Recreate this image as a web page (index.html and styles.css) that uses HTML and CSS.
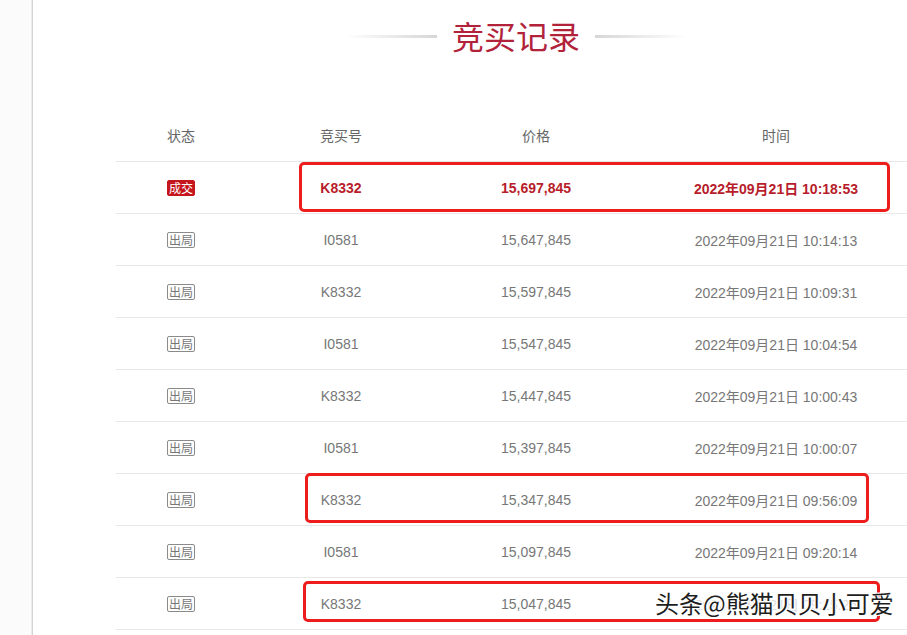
FILE: index.html
```html
<!DOCTYPE html>
<html>
<head lang="zh">
    <meta charset="UTF-8">
    <title>竞买记录</title>
    <link rel="stylesheet" href="styles.css">
</head>
<body>
<div class="page">
    <div class="title">
        <span class="line line-l"></span>
        <h2>竞买记录</h2>
        <span class="line line-r"></span>
    </div>

    <div class="record">
        <table>
            <thead>
            <tr>
                <th class="c1">状态</th>
                <th class="c2">竞买号</th>
                <th class="c3">价格</th>
                <th class="c4">时间</th>
            </tr>
            </thead>
            <tbody>
            <tr class="win">
                <td><span class="tag tag-win">成交</span></td>
                <td>K8332</td>
                <td>15,697,845</td>
                <td>2022年09月21日 10:18:53</td>
            </tr>
            <tr>
                <td><span class="tag">出局</span></td>
                <td>I0581</td>
                <td>15,647,845</td>
                <td>2022年09月21日 10:14:13</td>
            </tr>
            <tr>
                <td><span class="tag">出局</span></td>
                <td>K8332</td>
                <td>15,597,845</td>
                <td>2022年09月21日 10:09:31</td>
            </tr>
            <tr>
                <td><span class="tag">出局</span></td>
                <td>I0581</td>
                <td>15,547,845</td>
                <td>2022年09月21日 10:04:54</td>
            </tr>
            <tr>
                <td><span class="tag">出局</span></td>
                <td>K8332</td>
                <td>15,447,845</td>
                <td>2022年09月21日 10:00:43</td>
            </tr>
            <tr>
                <td><span class="tag">出局</span></td>
                <td>I0581</td>
                <td>15,397,845</td>
                <td>2022年09月21日 10:00:07</td>
            </tr>
            <tr>
                <td><span class="tag">出局</span></td>
                <td>K8332</td>
                <td>15,347,845</td>
                <td>2022年09月21日 09:56:09</td>
            </tr>
            <tr>
                <td><span class="tag">出局</span></td>
                <td>I0581</td>
                <td>15,097,845</td>
                <td>2022年09月21日 09:20:14</td>
            </tr>
            <tr>
                <td><span class="tag">出局</span></td>
                <td>K8332</td>
                <td>15,047,845</td>
                <td class="covered">2022年09月21日 09:15:26</td>
            </tr>
            </tbody>
        </table>

        <!-- 标注框 -->
        <div class="mark mark1"></div>
        <div class="mark mark2"></div>
        <div class="mark mark3"></div>
        <div class="watermark">头条@熊猫贝贝小可爱</div>
    </div>
</div>
</body>
</html>
```

FILE: styles.css
```css
* {
    margin: 0;
    padding: 0;
}

html, body {
    height: 100%;
}

body {
    background: #fbfbfb;
    overflow: hidden;
    font-family: Arial, "Liberation Sans", "Noto Sans CJK SC", sans-serif;
}

.page {
    margin-left: 32px;
    width: 967px;
    height: 100%;
    background: #fff;
    border-left: 1px solid #d4d4d4;
    box-shadow: -1px 0 0 #ececec;
    padding-top: 18px;
    box-sizing: border-box;
}

.title {
    display: flex;
    justify-content: center;
    align-items: center;
    gap: 15px;
    height: 40px;
}

.title h2 {
    font-size: 32px;
    font-weight: normal;
    line-height: 40px;
    color: #b2233b;
}

.title .line {
    width: 93px;
    height: 3px;
    margin-top: -4px;
}

.line-l {
    background: linear-gradient(to right, rgba(210, 210, 210, 0), #d6d6d6);
}

.line-r {
    background: linear-gradient(to left, rgba(210, 210, 210, 0), #d6d6d6);
}

.record {
    position: relative;
    width: 800px;
    margin: 51px auto 0;
}

table {
    width: 100%;
    border-collapse: collapse;
    table-layout: fixed;
}

th, td {
    height: 51px;
    text-align: center;
    font-size: 14px;
    border-bottom: 1px solid #e8e8e8;
}

th {
    font-weight: normal;
    color: #666;
    height: 52px;
}

td {
    color: #777;
}

td.covered {
    color: #ddd;
}

.c1 { width: 130px; }
.c2 { width: 190px; }
.c3 { width: 200px; }
.c4 { width: 280px; }

tr.win td {
    color: #b71d2b;
    font-weight: bold;
}

.tag {
    display: inline-block;
    width: 26px;
    height: 14px;
    line-height: 14px;
    font-size: 12px;
    font-weight: normal;
    color: #777;
    border: 1px solid #8a8a8a;
    border-radius: 2px;
    vertical-align: middle;
    font-family: "Noto Sans CJK SC", sans-serif;
}

tr.win td .tag-win {
    color: #fff;
    font-weight: normal;
    background: #c4161c;
    border-color: #c4161c;
}

.mark {
    position: absolute;
    border: 3px solid #ee1d1d;
    border-radius: 5px;
    box-sizing: border-box;
}

.mark1 {
    left: 183px;
    top: 53px;
    width: 591px;
    height: 50px;
}

.mark2 {
    left: 189px;
    top: 364px;
    width: 564px;
    height: 50px;
}

.mark3 {
    left: 187px;
    top: 472px;
    width: 577px;
    height: 41px;
}

.watermark {
    position: absolute;
    left: 539px;
    top: 479px;
    font-size: 24px;
    line-height: 30px;
    color: #1e1e1e;
    white-space: nowrap;
    font-family: "Noto Sans CJK SC", sans-serif;
    text-shadow: 1px 1px 0 #fff, -1px -1px 0 #fff, 1px -1px 0 #fff, -1px 1px 0 #fff;
}
```
